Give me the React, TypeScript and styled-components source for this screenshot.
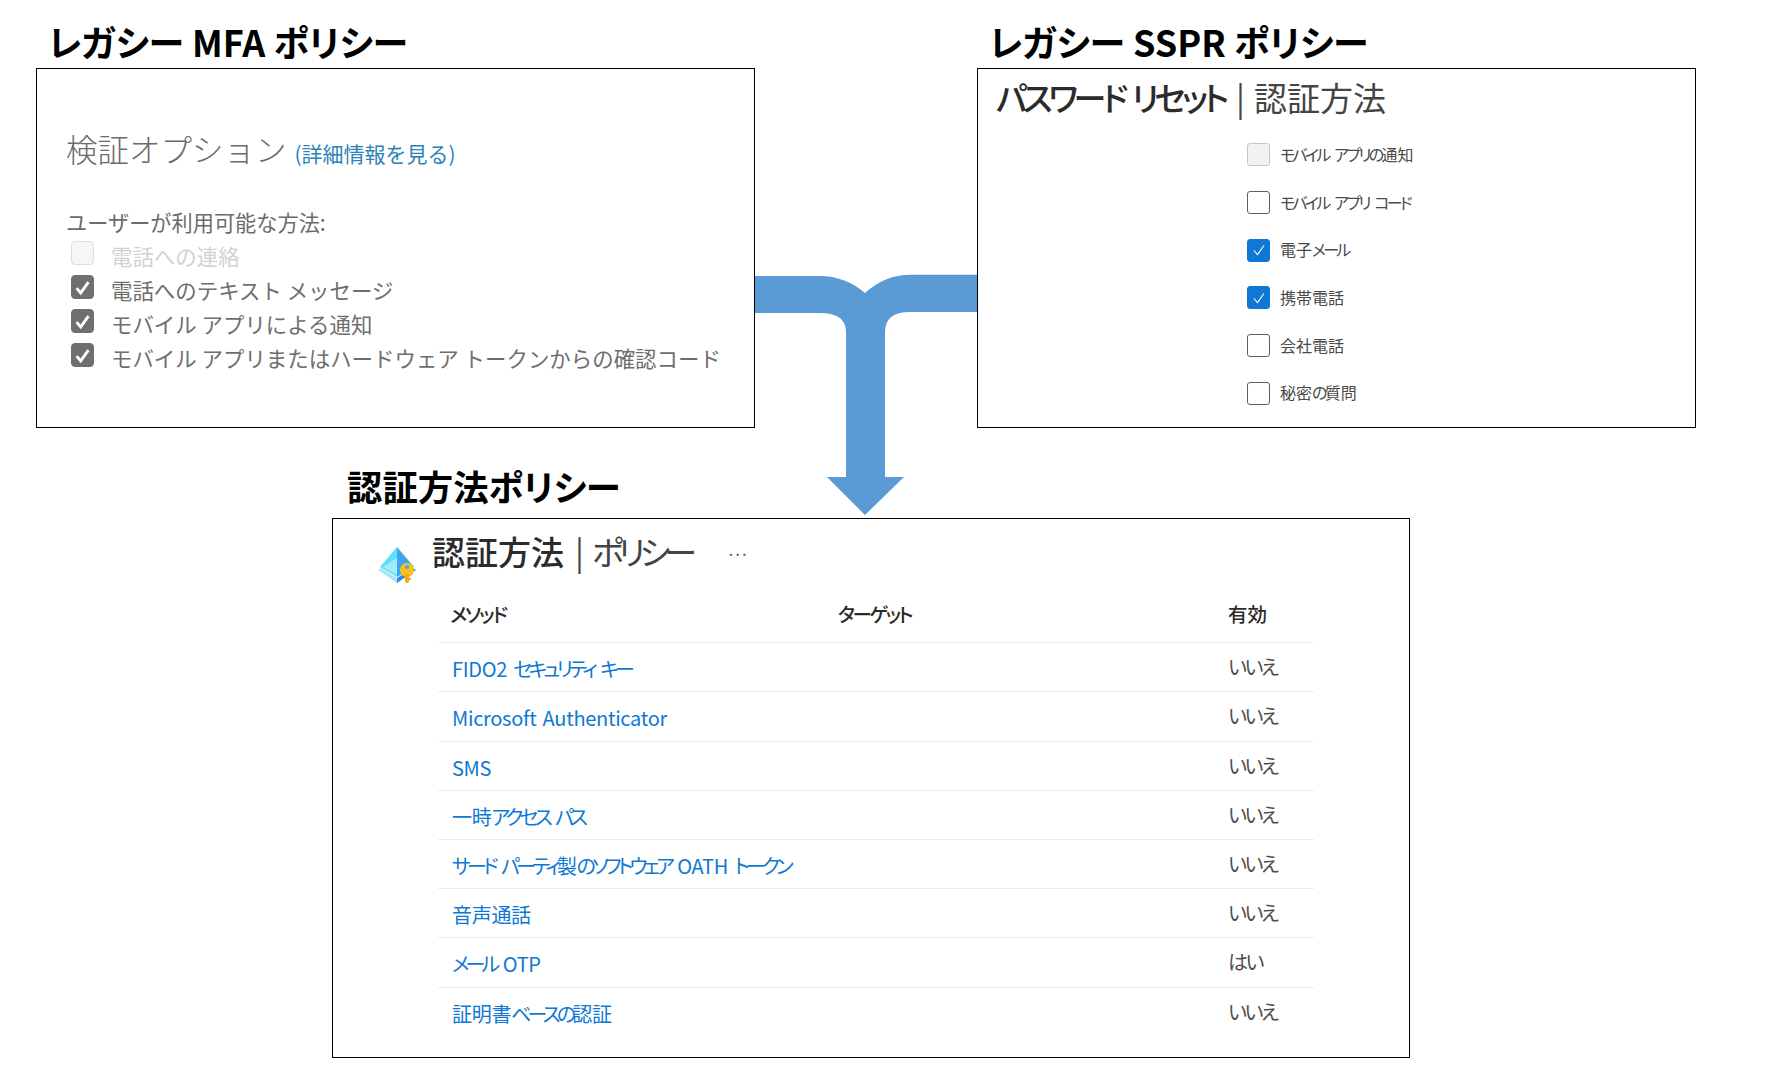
import React from "react";
import styled, { createGlobalStyle } from "styled-components";

const GlobalStyle = createGlobalStyle`
  html, body {
    margin: 0;
    padding: 0;
    background: #fff;
  }
  body {
    font-family: "Noto Sans CJK JP", "Noto Sans", sans-serif;
    font-feature-settings: "palt";
  }
`;

const Page = styled.div`
  position: relative;
  width: 1768px;
  height: 1081px;
  padding: 22px 0 0 36px;
  box-sizing: border-box;
  overflow: hidden;
`;

const TopRow = styled.div`
  display: flex;
  column-gap: 222px;
`;

const Section = styled.section`
  display: flex;
  flex-direction: column;
`;

const BottomSection = styled(Section)`
  margin: 39px 0 0 296px;
`;

const Heading = styled.h2<{ $bottom: number; $left: number; $size?: number }>`
  margin: 0 0 ${(p) => p.$bottom}px ${(p) => p.$left}px;
  font-size: ${(p) => p.$size ?? 36}px;
  font-weight: 700;
  line-height: 38px;
  color: #000;
  white-space: nowrap;
`;

const Panel = styled.div`
  width: 719px;
  height: 360px;
  box-sizing: border-box;
  border: 1.5px solid #000;
  background: #fff;
`;

const MfaPanel = styled(Panel)`
  padding: 59px 0 0 29px;
  font-feature-settings: normal;
`;

const SsprPanel = styled(Panel)`
  padding: 8px 0 0 18px;
`;

const PolicyPanel = styled(Panel)`
  width: 1078px;
  height: 540px;
  padding: 12px 0 0 44px;
`;

const MfaTitleRow = styled.div`
  display: flex;
  align-items: baseline;
  column-gap: 8px;
  line-height: 40px;
`;

const MfaTitle = styled.span`
  font-size: 31.5px;
  font-weight: 300;
  color: #6b6b6b;
`;

const MoreLink = styled.a`
  font-size: 21px;
  font-weight: 400;
  color: #2f82b8;
`;

const MfaLabel = styled.div`
  margin-top: 35px;
  font-size: 21.2px;
  line-height: 28px;
  color: #6b6b6b;
`;

const MfaList = styled.div`
  margin: 3px 0 0 5px;
`;

const MfaRow = styled.div<{ $disabled?: boolean }>`
  display: flex;
  column-gap: 17px;
  height: 34px;
  font-size: 21.45px;
  line-height: 34px;
  white-space: nowrap;
  color: ${(p) => (p.$disabled ? "#d2d2d2" : "#6e6e6e")};
`;

const MfaBox = styled.span<{ $checked: boolean }>`
  display: flex;
  align-items: center;
  justify-content: center;
  flex: none;
  width: 23px;
  height: 24px;
  margin-top: 2px;
  box-sizing: border-box;
  border-radius: 4px;
  border: 1.5px solid ${(p) => (p.$checked ? "#6f6f6f" : "#dcdcdc")};
  background: ${(p) => (p.$checked ? "#6f6f6f" : "#f6f6f6")};
`;

const PanelTitle = styled.h1`
  margin: 0;
  font-size: 33px;
  font-weight: 500;
  line-height: 40px;
  color: #2b2b2b;
  white-space: nowrap;
`;

const Kana = styled.span<{ $tracking: number }>`
  letter-spacing: ${(p) => p.$tracking}px;
`;

const TitleLight = styled.span`
  font-weight: 400;
  color: #444;
`;

const TitleBar = styled.span<{ $left: number; $right: number }>`
  margin: 0 ${(p) => p.$right}px 0 ${(p) => p.$left}px;
  font-weight: 400;
  color: #444;
`;

const SsprList = styled.div`
  margin: 14px 0 0 251px;
`;

const SsprRow = styled.div`
  display: flex;
  align-items: center;
  column-gap: 10px;
  height: 47.7px;
  font-size: 16px;
  word-spacing: 2px;
  color: #4a4a4a;
  white-space: nowrap;
`;

const SsprLabel = styled.span`
  margin-top: -2px;
`;

const SsprBox = styled.span<{ $state: "off" | "on" | "disabled" }>`
  display: flex;
  align-items: center;
  justify-content: center;
  flex: none;
  width: 23px;
  height: 23px;
  box-sizing: border-box;
  border-radius: 3px;
  border: 1.5px solid
    ${(p) =>
      p.$state === "on" ? "#0f78d4" : p.$state === "disabled" ? "#c8c6c4" : "#5f5f5f"};
  background: ${(p) =>
    p.$state === "on" ? "#0f78d4" : p.$state === "disabled" ? "#f3f2f1" : "#fff"};
`;

const PolicyHeader = styled.div`
  display: flex;
  align-items: flex-start;
`;

const PolicyIcon = styled.svg`
  flex: none;
  width: 40px;
  height: 40px;
  margin: 15px 15px 0 0;
`;

const Dots = styled.span`
  margin: -2px 0 0 37px;
  font-size: 17px;
  line-height: 40px;
  letter-spacing: 2px;
  color: #555;
`;

const Table = styled.div`
  width: 876px;
  margin: 8px 0 0 61px;
`;

const TableRow = styled.div<{ $header?: boolean }>`
  display: grid;
  grid-template-columns: 400px 390px 1fr;
  align-items: center;
  height: 49.2px;
  box-sizing: border-box;
  border-bottom: 1.5px solid #edebe9;
  font-size: 20px;
  ${(p) => p.$header && "padding-bottom: 10px; font-weight: 500; color: #2b2b2b;"}
  &:last-child {
    border-bottom: none;
  }
`;

const HeaderCell = styled.span<{ $indent?: boolean }>`
  font-size: 19.5px;
  padding-left: ${(p) => (p.$indent ? "12px" : "0")};
`;

const MethodLink = styled.a`
  grid-column: 1 / 3;
  padding: 3px 0 0 14px;
  letter-spacing: -0.3px;
  word-spacing: 2px;
  color: #0f78d4;
  white-space: nowrap;
`;

const EnabledCell = styled.span`
  padding-bottom: 1px;
  letter-spacing: -2.4px;
  color: #4d4d4d;
`;

const ArrowOverlay = styled.svg`
  position: absolute;
  left: 0;
  top: 0;
  pointer-events: none;
`;

const Check = ({ color, weight, size }: { color: string; weight: number; size: number }) => (
  <svg width={size} height={size} viewBox="0 0 16 16" fill="none">
    <path d="M3 8.5 L6.5 12.5 L13 3.5" stroke={color} strokeWidth={weight} />
  </svg>
);

// kana in the reference are set narrower than latin and kanji
const Squeezed = ({ text, tracking }: { text: string; tracking: number }) => (
  <span>
    {text.split(/([ァ-ヶーぁ-ん]+)/).map((part, i) =>
      i % 2 ? (
        <Kana key={i} $tracking={tracking}>
          {part}
        </Kana>
      ) : (
        part
      )
    )}
  </span>
);

const mfaMethods = [
  { label: "電話への連絡", checked: false },
  { label: "電話へのテキスト メッセージ", checked: true },
  { label: "モバイル アプリによる通知", checked: true },
  { label: "モバイル アプリまたはハードウェア トークンからの確認コード", checked: true },
];

const ssprMethods: { label: string; state: "off" | "on" | "disabled" }[] = [
  { label: "モバイル アプリの通知", state: "disabled" },
  { label: "モバイル アプリ コード", state: "off" },
  { label: "電子メール", state: "on" },
  { label: "携帯電話", state: "on" },
  { label: "会社電話", state: "off" },
  { label: "秘密の質問", state: "off" },
];

const policyMethods = [
  { name: "FIDO2 セキュリティ キー", enabled: "いいえ" },
  { name: "Microsoft Authenticator", enabled: "いいえ" },
  { name: "SMS", enabled: "いいえ" },
  { name: "一時アクセス パス", enabled: "いいえ" },
  { name: "サード パーティ製のソフトウェア OATH トークン", enabled: "いいえ" },
  { name: "音声通話", enabled: "いいえ" },
  { name: "メール OTP", enabled: "はい" },
  { name: "証明書ベースの認証", enabled: "いいえ" },
];

const App = () => {
  return (
    <Page>
      <GlobalStyle />
      <TopRow>
        <Section>
          <Heading $bottom={8} $left={12}>
            レガシー MFA ポリシー
          </Heading>
          <MfaPanel>
            <MfaTitleRow>
              <MfaTitle>検証オプション</MfaTitle>
              <MoreLink>(詳細情報を見る)</MoreLink>
            </MfaTitleRow>
            <MfaLabel>ユーザーが利用可能な方法:</MfaLabel>
            <MfaList>
              {mfaMethods.map((m) => (
                <MfaRow key={m.label} $disabled={!m.checked}>
                  <MfaBox $checked={m.checked}>
                    {m.checked && <Check color="#fff" weight={2.4} size={19} />}
                  </MfaBox>
                  {m.label}
                </MfaRow>
              ))}
            </MfaList>
          </MfaPanel>
        </Section>
        <Section>
          <Heading $bottom={8} $left={12}>
            レガシー SSPR ポリシー
          </Heading>
          <SsprPanel>
            <PanelTitle>
              <Squeezed text="パスワード リセット" tracking={-4.1} />
              <TitleBar $left={11} $right={9}>
                |
              </TitleBar>
              <TitleLight>認証方法</TitleLight>
            </PanelTitle>
            <SsprList>
              {ssprMethods.map((m) => (
                <SsprRow key={m.label}>
                  <SsprBox $state={m.state}>
                    {m.state === "on" && <Check color="#fff" weight={1.1} size={16} />}
                  </SsprBox>
                  <SsprLabel>
                    <Squeezed text={m.label} tracking={-2.7} />
                  </SsprLabel>
                </SsprRow>
              ))}
            </SsprList>
          </SsprPanel>
        </Section>
      </TopRow>
      <BottomSection>
        <Heading $bottom={13} $left={15} $size={35.4}>
          認証方法ポリシー
        </Heading>
        <PolicyPanel>
          <PolicyHeader>
            <PolicyIcon viewBox="0 0 40 40">
              <path d="M20 1 L3 21 L20 31 Z" fill="#5ae0fa" />
              <path d="M20 1 L37 21 L20 31 Z" fill="#41a5ee" />
              <path d="M20 12 L6 21 L20 29 Z" fill="#a5ecfb" />
              <path d="M1 24 L4 22 L20 32 L20 37 Z" fill="#a8e6f8" />
              <path d="M39 24 L36 22 L20 32 L20 37 Z" fill="#2a8fe0" />
              <circle cx="30" cy="24" r="7" fill="#f8c21c" />
              <circle cx="30" cy="21" r="2" fill="#4aa3e0" />
              <path d="M28 28 H32 V36 Q30 38 28 36 Z" fill="#f4a90c" />
              <rect x="31" y="32" width="3" height="2" fill="#f4a90c" />
            </PolicyIcon>
            <PanelTitle>
              認証方法
              <TitleBar $left={11} $right={8}>
                |
              </TitleBar>
              <TitleLight>
                <Squeezed text="ポリシー" tracking={-5.6} />
              </TitleLight>
            </PanelTitle>
            <Dots>...</Dots>
          </PolicyHeader>
          <Table>
            <TableRow $header>
              <HeaderCell $indent>
                <Squeezed text="メソッド" tracking={-2} />
              </HeaderCell>
              <HeaderCell>
                <Squeezed text="ターゲット" tracking={-2.5} />
              </HeaderCell>
              <HeaderCell>有効</HeaderCell>
            </TableRow>
            {policyMethods.map((m) => (
              <TableRow key={m.name}>
                <MethodLink>
                  <Squeezed text={m.name} tracking={-3.8} />
                </MethodLink>
                <EnabledCell>{m.enabled}</EnabledCell>
              </TableRow>
            ))}
          </Table>
        </PolicyPanel>
      </BottomSection>
      <ArrowOverlay width="1768" height="1081" viewBox="0 0 1768 1081">
        <path
          d="M755 276 L820 276 Q845 276 865 293 Q885 274.7 910 274.7 L977 274.7 L977 312 L910 312 Q885 312 885 332 L885 477 L904 477 L865 515 L827 477 L846 477 L846 332 Q846 313 820 313 L755 313 Z"
          fill="#5b9bd5"
        />
      </ArrowOverlay>
    </Page>
  );
};

export default App;
